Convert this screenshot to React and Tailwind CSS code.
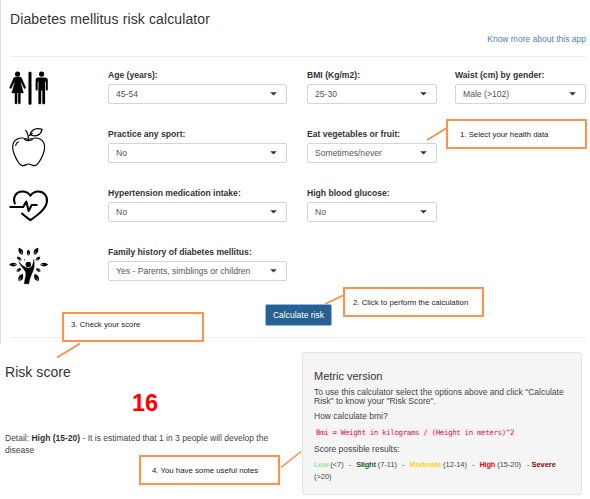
import React from "react";

function RestroomIcon() {
  return (
    <svg className="mt-[3px] -ml-px h-[35px] w-[40px]" viewBox="9 71 40 35" fill="#000">
      <circle cx="17.6" cy="74.100" r="2.600" />
      <path d="M15.4 77h4.4c1.2 0 1.8.6 2.1 1.5l3.7 8.7c.5 1.3-1.1 2-1.7.8l-3.2-6.6.1 1.9 2.7 9.7h-3.1v10c0 1.4-2.2 1.4-2.2 0V93h-1.1v10c0 1.4-2.2 1.4-2.2 0V93h-3.2l2.8-9.7.1-1.9-3.2 6.6c-.6 1.200-2.200.5-1.700-.8l3.700-8.700c.3-.9.9-1.500 2-1.500z" stroke="#000" strokeWidth=".3" />
      <rect x="28.5" y="71.7" width="3" height="33" rx="1.3" />
      <circle cx="41.6" cy="74.100" r="2.600" />
      <path d="M38.2 77.5h6.9c1.7 0 2.7 1 2.7 2.7v9.2c0 1.5-2 1.5-2 0v-7.8h-.7V103c0 1.7-2.8 1.7-2.8 0V90.4h-1.1V103c0 1.7-2.8 1.7-2.8 0V81.600h-.7v7.800c0 1.500-2.100 1.500-2.100 0v-9.200c0-1.700 1-2.700 2.600-2.700z" />
    </svg>
  );
}

function AppleIcon() {
  return (
    <svg className="ml-[1px] h-[40px] w-[36px]" viewBox="11 127 36 40" fill="none" stroke="#000" strokeWidth="1.2" strokeLinecap="round" strokeLinejoin="round">
      <path d="M28.500 139.500C25 138 20.500 137.300 17 139.200c-5.500 3-5 10-2.700 15.300 1.800 4.300 4 9.500 7.300 10.900 3 1.100 4.300-1.400 6.900-1.400 2.500 0 4 2.500 7 1.400 3.400-1.300 5.700-6.600 7.500-10.900 2.300-5.300 2.800-12.300-2.700-15.300-3.400-1.900-8-1.200-11.800.3z" />
      <path d="M25.700 130.300c1.900 2.200 2.700 4.700 2.800 10M24.300 139.200c1.500 1.800 6.700 1.800 8.400-.1" />
      <path d="M30 134.800c1.500-5 5.700-7.100 12.100-5.500-1.200 5.600-6 8-12.100 5.500zm-1.300 1c1-.2 2.600-1.900 3.600-2.200M15.700 145.500c.1-.8.400-1.500 1-2.100M17 142.800l1.300-.8" />
    </svg>
  );
}

function HeartIcon() {
  return (
    <svg className="mt-[4px] -ml-px h-[32px] w-[40px]" viewBox="9 190 40 32" fill="none" stroke="#000" strokeWidth="2.100" strokeLinecap="round" strokeLinejoin="round">
      <path d="M14.800 203.500c-2.500-7.100 1.900-12 7.700-12 4 0 6.700 2.100 7.900 4.200 1.400-2.100 4-4.200 7.800-4.200 5.900 0 9.500 4.700 8.700 10.400-1.100 7.400-9.600 13.300-16.500 18.300-3.600-2.700-6-4.500-8.400-6.700" />
      <path d="M10.300 207h12.900l3.100-5.400 2.300 9.400 3.100-6h5" />
    </svg>
  );
}

const leaves = [
  [20.800, 250.300, -30, 4.200, 2.400], [28.400, 251.800, 0, 3.200, 1.900], [36, 250.300, 30, 4.200, 2.400],
  [19.200, 257.600, -53, 3, 1.700], [38, 257.600, 53, 3, 1.700],
  [13.300, 263.600, -90, 4.200, 2.100], [44, 263.600, 90, 4.200, 2.100],
  [18.800, 269, 60, 2.800, 1.700], [38.300, 269, -60, 2.800, 1.700],
  [20.800, 276.700, 27, 4.300, 2.500], [36.500, 276.700, -27, 4.300, 2.500],
];

function FamilyTreeIcon() {
  return (
    <svg className="mt-[2px] -ml-px h-[38px] w-[40px]" viewBox="9 246 40 38" fill="#000">
      {leaves.map(([x, y, r, h, w], i) => (
        <g key={i} transform={`translate(${x} ${y}) rotate(${r})`}>
          <path d={`M0 ${-h}Q${w * 1.8} 0 0 ${h}Q${-w * 1.8} 0 0 ${-h}`} />
          <path d={`M0 ${h}V${h * 0.1}`} stroke="#fff" strokeWidth=".5" />
        </g>
      ))}
      <circle cx="28.300" cy="263.400" r="2.700" />
      <path d="M18.800 260.500c3.200 3.900 6.500 6.500 9.800 6.500 3.300 0 4.800-4.200 5.200-8.700.9 5.200.6 9.300-1 12.200-1.600 3.600-3.500 8-4 12.300h-4.600c.9-6 2.400-9.200 1.300-12-1.200-3.100-5.100-5.500-6.700-10.300z" stroke="#000" strokeWidth=".4" />
      <path d="M24.400 257.700l.8 2.600-1.400-2z" />
    </svg>
  );
}

function Field({ label, value, className }) {
  return (
    <div className={className}>
      <div className="h-[16px] text-[8.600px] leading-[15px] font-bold whitespace-nowrap text-[#333]">{label}</div>
      <div className="flex h-[20px] items-center justify-between rounded-[2px] border border-[#d4d4d4] bg-white pr-[9px] pl-[7px]">
        <span className="text-[8.600px] leading-[18px] whitespace-nowrap text-[#555]">{value}</span>
        <svg className="h-[4px] w-[7px]" viewBox="0 0 7 4" fill="#333"><path d="M.2.300h6.600L3.500 3.600z" /></svg>
      </div>
    </div>
  );
}

function Callout({ className, children }) {
  return (
    <div className={`absolute flex h-[30px] border-2 border-[#ff9248] bg-white text-[7.800px] whitespace-nowrap text-[#222] ${className}`}>
      {children}
    </div>
  );
}

function Score({ name, range, color, dash }) {
  return (
    <>
      <b className={`tracking-[-0.150px] ${color}`}>{name}</b>
      <span className="ml-[2px]">{range}</span>
      {dash && <span className="mr-[5px] ml-[5px]">-</span>}
    </>
  );
}

export default function App() {
  return (
    <div className="relative h-[499px] w-[590px] overflow-hidden bg-white font-['Liberation_Sans',Arial,sans-serif] text-[8.500px] text-[#444]">
      <main className="h-[344px] border-l border-[#dcdcdc] pr-[4px] pl-[9px]">
        <header className="flex h-[57px] flex-col border-b border-[#eee] pt-[9px]">
          <h1 className="text-[14px] leading-[20px] tracking-[0.120px] text-[#333]">Diabetes mellitus risk calculator</h1>
          <a className="mt-[3px] self-end text-[8.500px] leading-[14px] text-[#4f7fae]">Know more about this app</a>
        </header>
        <section className="pt-[11px]">
          <div className="flex h-[59px]">
            <div className="w-[98px]"><RestroomIcon /></div>
            <Field className="mr-[20px] w-[179px]" label="Age (years):" value="45-54" />
            <Field className="mr-[18px] w-[130px]" label="BMI (Kg/m2):" value="25-30" />
            <Field className="w-[131px]" label="Waist (cm) by gender:" value="Male (>102)" />
          </div>
          <div className="flex h-[59px]">
            <div className="w-[98px]"><AppleIcon /></div>
            <Field className="mr-[20px] w-[179px]" label="Practice any sport:" value="No" />
            <Field className="w-[130px]" label="Eat vegetables or fruit:" value="Sometimes/never" />
          </div>
          <div className="flex h-[59px]">
            <div className="w-[98px]"><HeartIcon /></div>
            <Field className="mr-[20px] w-[179px]" label="Hypertension medication intake:" value="No" />
            <Field className="w-[130px]" label="High blood glucose:" value="No" />
          </div>
          <div className="flex h-[59px]">
            <div className="w-[98px]"><FamilyTreeIcon /></div>
            <Field className="w-[179px]" label="Family history of diabetes mellitus:" value="Yes - Parents, simblings or children" />
          </div>
        </section>
        <div className="h-[34px] border-b border-[#eee]">
          <button className="ml-[255px] flex h-[22px] w-[67px] items-center justify-center rounded-[2px] border border-[#8fb5f0] bg-[#286090] text-[8.500px] whitespace-nowrap text-white">Calculate risk</button>
        </div>
      </main>

      <div className="flex">
        <section className="w-[302px] pl-[5px]">
          <h2 className="mt-[18px] text-[14px] leading-[20px] tracking-[0.050px] text-[#333]">Risk score</h2>
          <div className="mt-[7px] pl-[127px] text-[23.500px] leading-[28px] font-bold text-[#f00]">16</div>
          <p className="mt-[15px] text-[8.500px] leading-[12px] whitespace-nowrap">
            Detail: <b className="text-[#333]">High (15-20)</b> - It is estimated that 1 in 3 people will develop the<br />disease
          </p>
        </section>
        <aside className="mt-[8px] h-[143px] w-[280px] rounded-[3px] border border-[#e3e3e3] bg-[#f5f5f5] pt-[15px] pl-[11px] whitespace-nowrap">
          <h3 className="text-[11px] leading-[16px] text-[#333]">Metric version</h3>
          <p className="mt-[4px] text-[8.500px] leading-[9px]">To use this calculator select the options above and click "Calculate<br />Risk" to know your "Risk Score".</p>
          <p className="mt-[4px] text-[8.500px] leading-[12px]">How calculate bmi?</p>
          <p className="mt-[6px] text-[8px] leading-[10px]">
            <code className="rounded-[1px] bg-[#f9f2f4] px-[2px] font-['DejaVu_Sans_Mono','Liberation_Mono',monospace] text-[7.500px] tracking-[-0.390px] text-[#c7254e]">Bmi = Weight in kilograms / (Height in meters)^2</code>
          </p>
          <p className="mt-[5px] text-[8.500px] leading-[12px]">Score possible results:</p>
          <p className="mt-[4px] text-[7.400px] leading-[12px]">
            <Score name="Low" range="(<7)" color="text-[#90ee90]" dash />
            <Score name="Slight" range="(7-11)" color="text-[#206020]" dash />
            <Score name="Moderate" range="(12-14)" color="text-[#ffd21f]" dash />
            <Score name="High" range="(15-20)" color="text-[#f00]" />
            <span className="mr-[2px] ml-[6px]">-</span>
            <b className="text-[#8b0000]">Severe</b><br />(&gt;20)
          </p>
        </aside>
      </div>

      <div className="absolute top-[334px] left-[60px] h-[8px] w-[145px] bg-white" />
      <Callout className="top-[119px] left-[446px] w-[141px] pt-[8px] pl-[12px]">1. Select your health data</Callout>
      <Callout className="top-[287px] left-[343px] w-[141px] pt-[8px] pl-[8px]">2. Click to perform the calculation</Callout>
      <Callout className="top-[312px] left-[62px] w-[142px] pt-[5px] pl-[7px]">3. Check your score</Callout>
      <Callout className="top-[455px] left-[139px] w-[141px] pt-[8px] pl-[11px]">4. You have some useful notes</Callout>
      <svg className="pointer-events-none absolute inset-0 h-[499px] w-[590px]" viewBox="0 0 590 499" fill="none" stroke="#ff8a3c" strokeWidth="1.600">
        <path d="M446 128.500L427 140M343 295.500L325 304M80 343.500L57 357.500M281 467.500L301 451.500" />
      </svg>
    </div>
  );
}
